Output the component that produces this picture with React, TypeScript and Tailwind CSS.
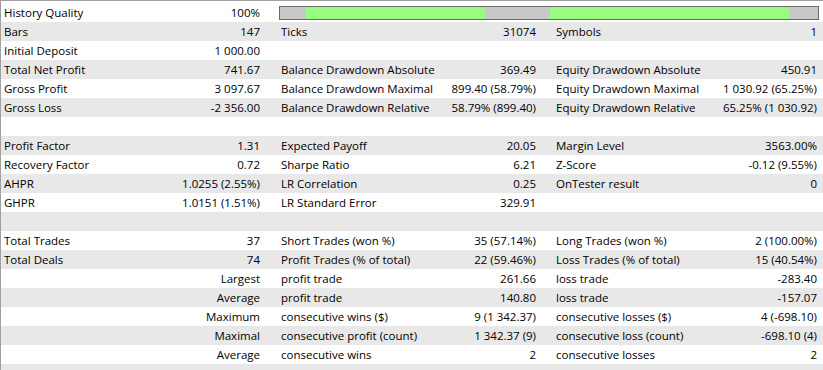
import React from 'react';

type Row = [string, string, string, string, string, string];

const rows: Row[] = [
  ['Bars', '147', 'Ticks', '31074', 'Symbols', '1'],
  ['Initial Deposit', '1 000.00', '', '', '', ''],
  ['Total Net Profit', '741.67', 'Balance Drawdown Absolute', '369.49', 'Equity Drawdown Absolute', '450.91'],
  ['Gross Profit', '3 097.67', 'Balance Drawdown Maximal', '899.40 (58.79%)', 'Equity Drawdown Maximal', '1 030.92 (65.25%)'],
  ['Gross Loss', '-2 356.00', 'Balance Drawdown Relative', '58.79% (899.40)', 'Equity Drawdown Relative', '65.25% (1 030.92)'],
  ['', '', '', '', '', ''],
  ['Profit Factor', '1.31', 'Expected Payoff', '20.05', 'Margin Level', '3563.00%'],
  ['Recovery Factor', '0.72', 'Sharpe Ratio', '6.21', 'Z-Score', '-0.12 (9.55%)'],
  ['AHPR', '1.0255 (2.55%)', 'LR Correlation', '0.25', 'OnTester result', '0'],
  ['GHPR', '1.0151 (1.51%)', 'LR Standard Error', '329.91', '', ''],
  ['', '', '', '', '', ''],
  ['Total Trades', '37', 'Short Trades (won %)', '35 (57.14%)', 'Long Trades (won %)', '2 (100.00%)'],
  ['Total Deals', '74', 'Profit Trades (% of total)', '22 (59.46%)', 'Loss Trades (% of total)', '15 (40.54%)'],
  ['', 'Largest', 'profit trade', '261.66', 'loss trade', '-283.40'],
  ['', 'Average', 'profit trade', '140.80', 'loss trade', '-157.07'],
  ['', 'Maximum', 'consecutive wins ($)', '9 (1 342.37)', 'consecutive losses ($)', '4 (-698.10)'],
  ['', 'Maximal', 'consecutive profit (count)', '1 342.37 (9)', 'consecutive loss (count)', '-698.10 (4)'],
  ['', 'Average', 'consecutive wins', '2', 'consecutive losses', '2'],
  ['', '', '', '', '', ''],
];

function Cell({ label, value, className }: { label: string; value: string; className: string }) {
  return (
    <div className={`flex justify-between ${className}`}>
      <span>{label}</span>
      <span>{value}</span>
    </div>
  );
}

function QualityBar() {
  // segments of the history quality strip
  const segs: [number, boolean][] = [
    [26, false],
    [179, true],
    [65, false],
    [239, true],
    [29, false],
  ];
  return (
    <div className="ml-[-2px] flex h-[14px] w-[540px] border border-[#6b6b6b] bg-[#c8c8c8]">
      {segs.map(([w, green], i) => (
        <div key={i} className={green ? 'h-full bg-[#99fc80]' : 'h-full bg-[#c8c8c8]'} style={{ width: w }} />
      ))}
    </div>
  );
}

export default function App() {
  return (
    <div
      className="h-[370px] w-[823px] overflow-hidden border-l border-t border-[#a0a0a0] bg-white pt-[2px] text-[11.5px] text-black"
      style={{ fontFamily: '"Open Sans", sans-serif' }}
    >
      <div className="flex h-[19px] items-center">
        <Cell label="History Quality" value="100%" className="w-[259px] pl-[3px]" />
        <div className="ml-[21px]">
          <QualityBar />
        </div>
      </div>
      {rows.map((r, i) => (
        <div key={i} className={`flex h-[19px] items-center ${i % 2 === 0 ? 'bg-[#e8e8e8]' : 'bg-white'}`}>
          <Cell label={r[0]} value={r[1]} className="w-[259px] pl-[3px]" />
          <Cell label={r[2]} value={r[3]} className="ml-[21px] w-[255px]" />
          <Cell label={r[4]} value={r[5]} className="ml-[20px] w-[261px]" />
        </div>
      ))}
    </div>
  );
}
